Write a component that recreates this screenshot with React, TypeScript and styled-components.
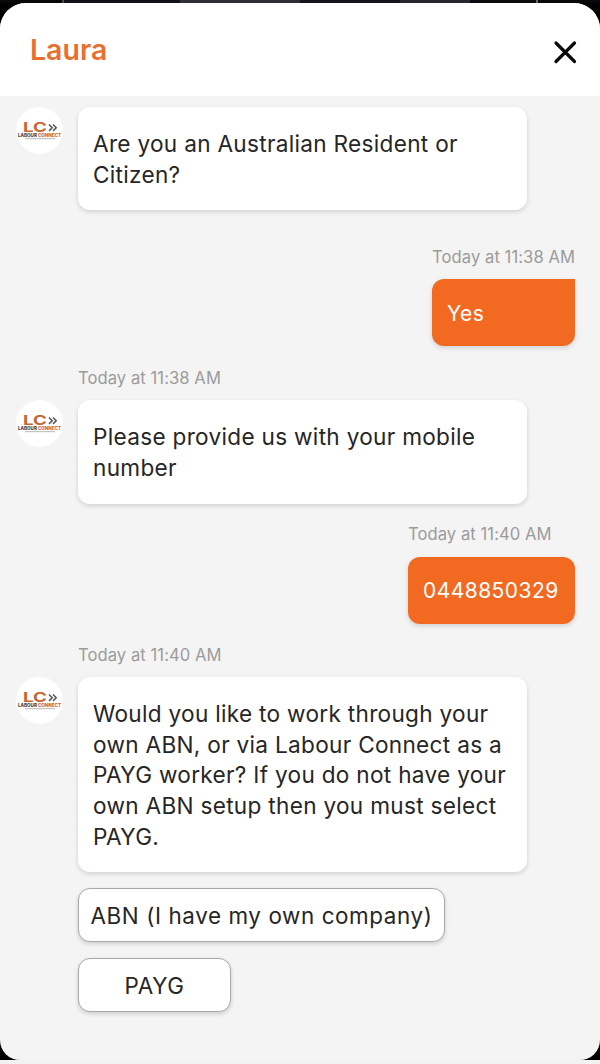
import React from "react";
import styled, { createGlobalStyle } from "styled-components";

const Global = createGlobalStyle`
  html, body { margin: 0; padding: 0; background: #000; }
  #root { width: 600px; height: 1064px; overflow: hidden; }
  * { box-sizing: border-box; }
`;

const Screen = styled.div`
  width: 600px; height: 1064px; display: flex; flex-direction: column;
  background: #000; font-family: Inter, "Open Sans", sans-serif; color: #262626;
`;
const BackdropStrip = styled.div`
  height: 3px; flex: none;
  background: linear-gradient(90deg, #08080a 0 62px, #44474c 62px 64px, #111318 64px 180px, #2c3036 180px 300px, #14161b 300px 400px, #24272c 400px 470px, #0a0b0e 470px 536px, #66686b 536px 538px, #08080a 538px);
`;
const Sheet = styled.div`
  flex: none; height: 1057px; border-radius: 26px 26px 20px 20px; overflow: hidden;
  background: #f4f4f4; display: flex; flex-direction: column;
`;
const BottomStrip = styled.div`
  flex: 1; background: #f2f2f2;
`;
const Header = styled.header`
  flex: none; height: 93px; background: #fff; padding: 0 20px 0 30px;
  display: flex; align-items: center; justify-content: space-between;
`;
const Title = styled.h1`
  margin: 1px 0 0; font-size: 28.5px; line-height: 32px; font-weight: 600; color: #e8702f;
`;
const CloseButton = styled.button`
  border: 0; background: none; padding: 0; width: 30px; height: 30px; display: flex; margin-top: 5px;
`;
const Thread = styled.main`
  flex: 1; padding: 11px 25px 0 16px; display: flex; flex-direction: column;
`;
const IncomingRow = styled.div`
  display: flex; gap: 15px; align-items: flex-start;
`;
const Avatar = styled.div`
  flex: none; width: 47px; height: 47px; border-radius: 50%; background: #fff;
  display: flex;
`;
const Bubble = styled.div`
  width: 449px; padding: 22px 15px 20px; background: #fff; border-radius: 12px;
  font-size: 22.6px; line-height: 30.7px; letter-spacing: .3px; color: #262626;
  box-shadow: 0 2px 5px rgba(0,0,0,.14);
`;
const Stamp = styled.div<{ $top: number }>`
  font-size: 16.6px; line-height: 22px; color: #9b9b9b; margin-top: ${p => p.$top}px;
  letter-spacing: .06px;
`;
const IncomingStamp = styled(Stamp)`
  margin-left: 62px; margin-bottom: 11px;
`;
const OutgoingGroup = styled.div<{ $gap: number }>`
  align-self: flex-end; display: flex; flex-direction: column; align-items: flex-start; gap: ${p => p.$gap}px;
`;
const StampRight = styled(Stamp)`
  align-self: flex-end;
`;
const OutBubble = styled.div<{ $w: number; $square: boolean }>`
  width: ${p => p.$w}px; height: 67px; padding: 1px 15px 0; background: #f26a21; color: #fff;
  display: flex; align-items: center;
  border-radius: ${p => (p.$square ? "12px 0 12px 12px" : "12px")};
  font-size: 21px; letter-spacing: .45px;
  box-shadow: 0 2px 5px rgba(0,0,0,.14);
`;
const Options = styled.div`
  margin: 16px 0 0 62px; display: flex; flex-direction: column; align-items: flex-start; gap: 16px;
`;
const Option = styled.button<{ $w: number }>`
  width: ${p => p.$w}px; height: 54px; padding: 0; background: #fff; border: 1px solid #a8a8a8;
  border-radius: 12px; font: inherit; font-size: 22.4px; color: #262626; letter-spacing: .6px;
  box-shadow: 0 2px 4px rgba(0,0,0,.16);
`;
const LogoMark = () => (
  <svg width="47" height="47" viewBox="0 0 47 47" aria-hidden="true">
    <text x="7" y="25" fontFamily="Inter, sans-serif" fontSize="13" fontWeight="700" textLength="24" lengthAdjust="spacingAndGlyphs" fill="#c8662f">LC</text>
    <path d="M33 17.5l3.2 3.2-3.2 3.2M37 17.5l3.2 3.2-3.2 3.2" fill="none" stroke="#555" strokeWidth="1.5" />
    <text x="2" y="30" fontFamily="Inter, sans-serif" fontSize="4.6" fontWeight="800" textLength="43" lengthAdjust="spacingAndGlyphs" fill="#444">LABOUR <tspan fill="#c8662f">CONNECT</tspan></text>
    <rect x="9" y="31" width="30" height="1.2" fill="#c4c4c4" />
  </svg>
);
const CloseIcon = () => (
  <svg width="30" height="30" viewBox="0 0 30 30" aria-hidden="true">
    <path d="M6 6L24.5 24.5M24.5 6L6 24.5" stroke="#0a0a0a" strokeWidth="3.2" strokeLinecap="round" />
  </svg>
);

const Incoming = ({ children }: { children: React.ReactNode }) => (
  <IncomingRow>
    <Avatar><LogoMark /></Avatar>
    <Bubble>{children}</Bubble>
  </IncomingRow>
);

export default function App() {
  return (
    <Screen>
      <Global />
      <BackdropStrip />
      <Sheet>
        <Header>
          <Title>Laura</Title>
          <CloseButton aria-label="Close"><CloseIcon /></CloseButton>
        </Header>
        <Thread>
          <Incoming>Are you an Australian Resident or Citizen?</Incoming>
          <OutgoingGroup $gap={11}>
            <StampRight $top={36}>Today at 11:38 AM</StampRight>
            <OutBubble $w={143} $square>Yes</OutBubble>
          </OutgoingGroup>
          <IncomingStamp $top={21}>Today at 11:38 AM</IncomingStamp>
          <Incoming>Please provide us with your mobile number</Incoming>
          <OutgoingGroup $gap={12}>
            <Stamp $top={19}>Today at 11:40 AM</Stamp>
            <OutBubble $w={167} $square={false}>0448850329</OutBubble>
          </OutgoingGroup>
          <IncomingStamp $top={20}>Today at 11:40 AM</IncomingStamp>
          <Incoming>Would you like to work through your own ABN, or via Labour Connect as a PAYG worker? If you do not have your own ABN setup then you must select PAYG.</Incoming>
          <Options>
            <Option $w={367}>ABN (I have my own company)</Option>
            <Option $w={153}>PAYG</Option>
          </Options>
        </Thread>
      </Sheet>
      <BottomStrip />
    </Screen>
  );
}
